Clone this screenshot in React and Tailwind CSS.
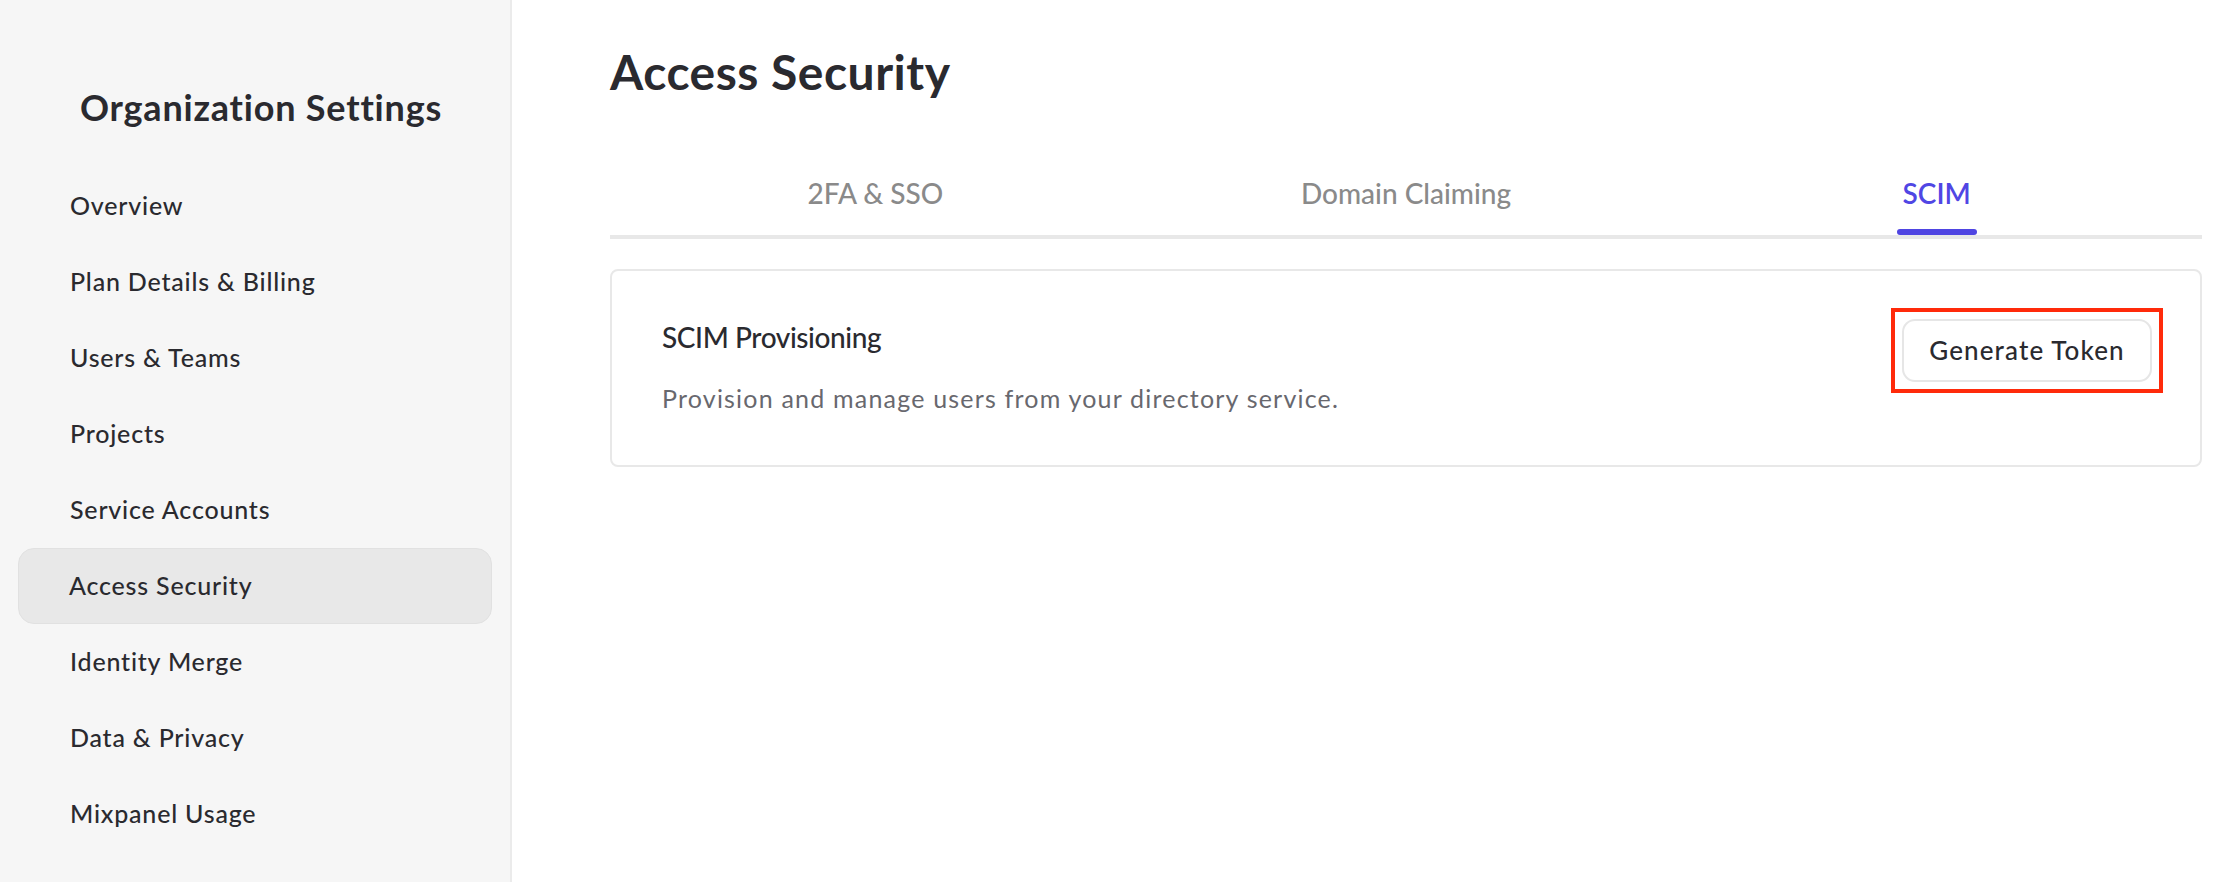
import React from "react";

const NAV = [
  "Overview",
  "Plan Details & Billing",
  "Users & Teams",
  "Projects",
  "Service Accounts",
  "Access Security",
  "Identity Merge",
  "Data & Privacy",
  "Mixpanel Usage",
];

const TABS = ["2FA & SSO", "Domain Claiming", "SCIM"];

export default function App() {
  return (
    <div
      className="flex h-[882px] w-full bg-white text-[#2a2a2f] overflow-hidden"
      style={{ fontFamily: "Lato, 'Noto Sans', sans-serif" }}
    >
      {/* Sidebar */}
      <aside className="w-[512px] shrink-0 bg-[#f6f6f6] border-r-2 border-[#ebebeb] flex flex-col">
        <h1 className="pt-[85px] text-center text-[36px] leading-[44px] font-bold tracking-[0.8px] pl-[12px]">
          Organization Settings
        </h1>
        <nav className="mt-[39px] mx-[18px] flex flex-col">
          {NAV.map((item) => {
            const active = item === "Access Security";
            return (
              <div
                key={item}
                className={
                  active
                    ? "h-[76px] flex items-center pl-[50px] rounded-[16px] bg-[#e8e8e8] border border-[#e1e1e1] text-[25px] font-medium tracking-[0.8px]"
                    : "h-[76px] flex items-center pl-[51px] text-[25px] font-medium tracking-[0.8px] border border-transparent"
                }
              >
                {item}
              </div>
            );
          })}
        </nav>
      </aside>

      {/* Main */}
      <main className="flex-1 pl-[98px] pr-[34px]">
        <h2 className="pt-[43px] text-[48px] leading-[58px] font-bold tracking-[0.5px]">Access Security</h2>

        <div className="mt-[72px] grid grid-cols-3 border-b-4 border-[#e8e8e8]">
          {TABS.map((tab) => {
            const active = tab === "SCIM";
            return (
              <div key={tab} className="flex flex-col items-center">
                <span
                  className={
                    active
                      ? "text-[28px] leading-[40px] font-semibold text-[#5046e4]"
                      : "text-[28px] leading-[40px] font-medium text-[#8a8a8a]"
                  }
                >
                  {tab}
                </span>
                <div
                  className={
                    active
                      ? "mt-[16px] h-[6px] w-[80px] rounded-full bg-[#4f45e2]"
                      : "mt-[16px] h-[6px] w-[80px]"
                  }
                />
              </div>
            );
          })}
        </div>

        <section className="mt-[30px] border-2 border-[#e8e8e8] rounded-[8px] px-[48px] pt-[48px] pb-[49px] flex items-start justify-between">
          <div className="flex flex-col pl-[2px]">
            <h3 className="text-[28px] leading-[36px] font-medium tracking-[-0.4px]">SCIM Provisioning</h3>
            <p className="mt-[25px] text-[25px] leading-[36px] text-[#68686e] tracking-[1.2px]">
              Provision and manage users from your directory service.
            </p>
          </div>
          <div className="relative">
            <button className="h-[63px] w-[250px] rounded-[13px] border-2 border-[#e6e6e6] bg-white text-[26px] font-medium tracking-[1.1px] text-[#2a2a2f]">
              Generate Token
            </button>
            <div className="absolute -inset-[11px] border-4 border-[#ff2a0a] pointer-events-none" />
          </div>
        </section>
      </main>
    </div>
  );
}
